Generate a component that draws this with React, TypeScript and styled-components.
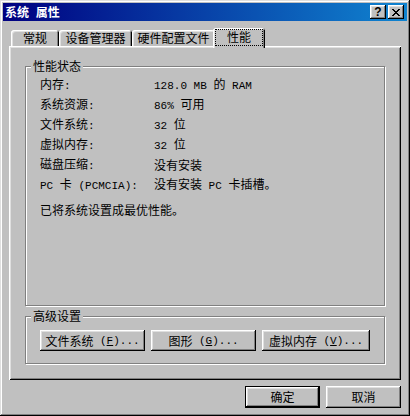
import React from "react";
import styled, { createGlobalStyle } from "styled-components";

const GlobalStyle = createGlobalStyle`
  html, body { margin: 0; padding: 0; background: #c0c0c0; }
  body { font-family: "Noto Sans CJK SC", "Liberation Sans", sans-serif; font-size: 12px; color: #000; }
  * { box-sizing: border-box; }
`;

const Window = styled.div`
  width: 410px;
  height: 416px;
  background: #c0c0c0;
  padding: 3px;
  display: flex;
  flex-direction: column;
  box-shadow: inset -1px -1px #000, inset 1px 1px #dfdfdf, inset -2px -2px #808080, inset 2px 2px #fff;
`;

const TitleBar = styled.div`
  height: 18px;
  display: flex;
  align-items: center;
  padding: 0 3px 0 2px;
  background: linear-gradient(90deg, #000080, #1084d0);
`;

const TitleText = styled.div`
  color: #fff;
  font-weight: bold;
  font-size: 12px;
  line-height: 18px;
  word-spacing: 4px;
`;

const TitleButtons = styled.div`
  margin-left: auto;
  display: flex;
  gap: 2px;
`;

const TitleButton = styled.div`
  width: 16px;
  height: 14px;
  background: #c0c0c0;
  display: flex;
  align-items: center;
  justify-content: center;
  font-family: "Liberation Sans", sans-serif;
  font-weight: bold;
  font-size: 12px;
  line-height: 14px;
  box-shadow: inset -1px -1px #000, inset 1px 1px #fff, inset -2px -2px #808080, inset 2px 2px #dfdfdf;
`;

const Body = styled.div`
  flex: 1;
  padding: 7px 6px 0 6px;
  display: flex;
  flex-direction: column;
`;

const TabStrip = styled.div`
  display: flex;
  align-items: flex-end;
  padding-left: 2px;
  height: 18px;
  position: relative;
  z-index: 1;
`;

const Tab = styled.div<{ $w: number; $active?: boolean }>`
  width: ${(p) => p.$w + (p.$active ? 4 : 0)}px;
  height: ${(p) => (p.$active ? 20 : 16)}px;
  margin: 0 ${(p) => (p.$active ? -2 : 0)}px ${(p) => (p.$active ? -2 : 0)}px;
  background: #c0c0c0;
  position: relative;
  z-index: ${(p) => (p.$active ? 2 : 0)};
  border-radius: 3px 3px 0 0;
  box-shadow: inset 1px 1px #fff, inset -1px 0 #000, inset 2px 2px #dfdfdf, inset -2px 0 #808080;
  display: flex;
  justify-content: center;
  padding-top: ${(p) => (p.$active ? 2 : 1)}px;
  line-height: 14px;
`;

const Focus = styled.span`
  outline: 1px dotted #000;
  outline-offset: 0;
  padding: 0 11px;
  height: 15px;
`;

const Panel = styled.div`
  height: 334px;
  background: #c0c0c0;
  padding: 20px 16px 16px;
  display: flex;
  flex-direction: column;
  gap: 10px;
  box-shadow: inset 1px 1px #fff, inset -1px -1px #000, inset 2px 2px #dfdfdf, inset -2px -2px #808080;
`;

const Group = styled.div<{ $h?: number }>`
  position: relative;
  border: 1px solid #808080;
  box-shadow: inset 1px 1px #fff, 1px 1px #fff;
  ${(p) => (p.$h ? `height: ${p.$h}px;` : "flex: 1;")}
`;

const GroupLabel = styled.div`
  position: absolute;
  top: -8px;
  left: 5px;
  padding: 0 2px;
  background: #c0c0c0;
  line-height: 14px;
`;

const StatusGrid = styled.div`
  display: grid;
  grid-template-columns: 114px 1fr;
  grid-auto-rows: 20px;
  align-items: center;
  padding: 8px 0 0 14px;
  line-height: 20px;
`;

const Message = styled.div`
  margin: 5px 0 0 14px;
  line-height: 20px;
`;

const ButtonRow = styled.div`
  display: flex;
  gap: 6px;
  padding: 13px 0 0 14px;
`;

const Button = styled.div<{ $w: number; $h?: number; $default?: boolean }>`
  width: ${(p) => p.$w}px;
  height: ${(p) => p.$h ?? 21}px;
  background: #c0c0c0;
  display: flex;
  align-items: center;
  justify-content: center;
  line-height: 14px;
  white-space: pre;
  ${(p) => (p.$default ? "border: 1px solid #000;" : "")}
  box-shadow: inset -1px -1px #000, inset 1px 1px #fff, inset -2px -2px #808080, inset 2px 2px #dfdfdf;
`;

const Footer = styled.div`
  display: flex;
  justify-content: flex-end;
  gap: 6px;
  margin-top: 6px;
`;

const Lat = styled.span`
  font-family: "Liberation Mono", monospace;
  font-size: 11px;
  white-space: pre;
`;

const Acc = styled(Lat)`
  text-decoration: underline;
`;

function mix(text: string) {
  return text.split(/([\x00-\x7f]+)/).filter(Boolean).map((part, i) =>
    /^[\x00-\x7f]+$/.test(part) ? <Lat key={i}>{part}</Lat> : <React.Fragment key={i}>{part}</React.Fragment>
  );
}

const rows: [string, string][] = [
  ["内存:", "128.0 MB 的 RAM"],
  ["系统资源:", "86% 可用"],
  ["文件系统:", "32 位"],
  ["虚拟内存:", "32 位"],
  ["磁盘压缩:", "没有安装"],
  ["PC 卡 (PCMCIA):", "没有安装 PC 卡插槽。"],
];

const tabs: { label: string; w: number; active?: boolean }[] = [
  { label: "常规", w: 48 },
  { label: "设备管理器", w: 73 },
  { label: "硬件配置文件", w: 83 },
  { label: "性能", w: 48, active: true },
];

const advanced: { pre: string; key: string; w: number }[] = [
  { pre: "文件系统", key: "F", w: 105 },
  { pre: "图形", key: "G", w: 105 },
  { pre: "虚拟内存", key: "V", w: 108 },
];

export default function App() {
  return (
    <>
      <GlobalStyle />
      <Window>
        <TitleBar>
          <TitleText>系统 属性</TitleText>
          <TitleButtons>
            <TitleButton>?</TitleButton>
            <TitleButton>
              <svg width="8" height="7" viewBox="0 0 8 7" shapeRendering="crispEdges">
                <path d="M0 0h2v1h1v1h2v-1h1v-1h2v1h-1v1h-1v1h-1v1h1v1h1v1h1v1h-2v-1h-1v-1h-2v1h-1v1h-2v-1h1v-1h1v-1h1v-1h-1v-1h-1v-1h-1z" fill="#000" />
              </svg>
            </TitleButton>
          </TitleButtons>
        </TitleBar>
        <Body>
          <TabStrip>
            {tabs.map((t) => (
              <Tab key={t.label} $w={t.w} $active={t.active}>
                {t.active ? <Focus>{t.label}</Focus> : t.label}
              </Tab>
            ))}
          </TabStrip>
          <Panel>
            <Group>
              <GroupLabel>性能状态</GroupLabel>
              <StatusGrid>
                {rows.map(([k, v]) => (
                  <React.Fragment key={k}>
                    <span>{mix(k)}</span>
                    <span>{mix(v)}</span>
                  </React.Fragment>
                ))}
              </StatusGrid>
              <Message>已将系统设置成最优性能。</Message>
            </Group>
            <Group $h={48}>
              <GroupLabel>高级设置</GroupLabel>
              <ButtonRow>
                {advanced.map((b) => (
                  <Button key={b.key} $w={b.w}>
                    {b.pre}
                    <Lat> (</Lat>
                    <Acc>{b.key}</Acc>
                    <Lat>)...</Lat>
                  </Button>
                ))}
              </ButtonRow>
            </Group>
          </Panel>
          <Footer>
            <Button $w={75} $h={22} $default>确定</Button>
            <Button $w={75} $h={22}>取消</Button>
          </Footer>
        </Body>
      </Window>
    </>
  );
}
